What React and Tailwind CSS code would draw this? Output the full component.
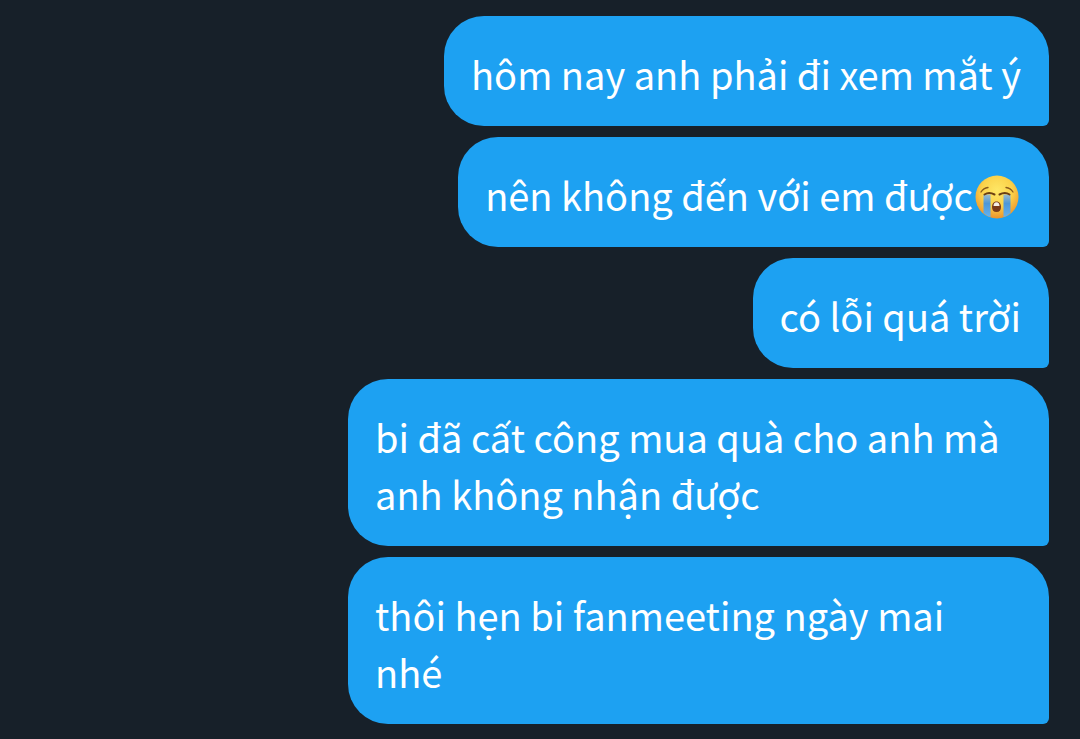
const messages = [
  { id: 1, text: 'hôm nay anh phải đi xem mắt ý' },
  { id: 2, text: 'nên không đến với em được', crying: true },
  { id: 3, text: 'có lỗi quá trời' },
  { id: 4, text: 'bi đã cất công mua quà cho anh mà anh không nhận được', long: true },
  { id: 5, text: 'thôi hẹn bi fanmeeting ngày mai nhé', long: true },
]

function CryingFace() {
  return (
    <svg viewBox="0 0 48 48" className="-mt-4 -mb-2 inline-block size-12 align-middle" role="img" aria-label="loudly crying face">
      <defs>
        <radialGradient id="face" cx="50%" cy="35%" r="65%">
          <stop offset="0" stopColor="#fee766" />
          <stop offset="0.55" stopColor="#fbd24a" />
          <stop offset="1" stopColor="#ec932c" />
        </radialGradient>
        <linearGradient id="tear" x1="0" y1="0" x2="0" y2="1">
          <stop offset="0" stopColor="#9dbccb" />
          <stop offset="0.4" stopColor="#4c97d8" />
          <stop offset="1" stopColor="#62b3f2" />
        </linearGradient>
      </defs>
      <circle cx="24" cy="24" r="21.5" fill="url(#face)" />
      <path d="M10.500 21.500h7v22.500q-4-1-7-4zM30.500 21.500h7v18.500q-3 3-7 4z" fill="url(#tear)" />
      <path d="M8 19q2.500-4 7-4.500M40 19q-2.500-4-7-4.500" fill="none" stroke="#8a5a1c" strokeWidth="1.3" strokeLinecap="round" />
      <path d="M11.500 21.500q4.500-2.800 10 0M26.500 21.500q5.500-2.800 10 0" fill="none" stroke="#6b3f12" strokeWidth="2" strokeLinecap="round" />
      <path d="M23.500 28.500c-3 0-4.500 2.500-4.500 5.500s1.500 5 4.500 5 4.500-2 4.500-5-1.500-5.500-4.500-5.500z" fill="#7a3a18" />
      <path d="M20.500 33q0-3.800 3-3.800t3 3.800z" fill="#f4efe6" />
    </svg>
  )
}

function Bubble({ message }) {
  return (
    <li
      className={`max-w-[701px] rounded-[40px] rounded-br-md bg-[#1da1f2] pt-[29px] pr-[28px] pb-[24px] pl-[27px] ${
        message.long ? 'w-full' : ''
      }`}
    >
      <p className="max-w-[640px]">
        {message.text}
        {message.crying && <CryingFace />}
      </p>
    </li>
  )
}

export default function App() {
  return (
    <main className="min-h-screen bg-[#172029] pt-4 pr-[31px] pb-3 pl-4 font-['Noto_Sans_CJK_JP','Noto_Sans',sans-serif] text-[38px] leading-[57px] text-white">
      <ul className="flex flex-col items-end gap-[11px]">
        {messages.map(message => (
          <Bubble key={message.id} message={message} />
        ))}
      </ul>
    </main>
  )
}
